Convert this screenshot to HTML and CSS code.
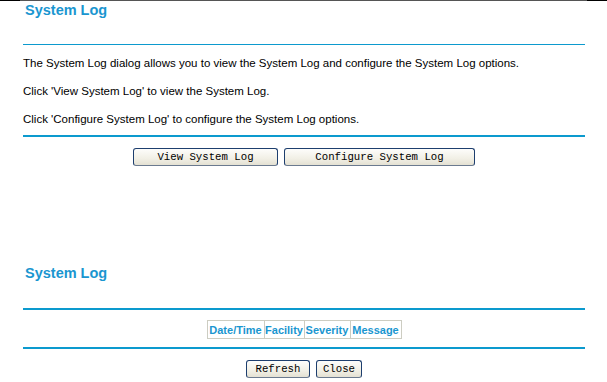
FILE: index.html
```html
<!DOCTYPE html>
<html lang="en">
<head>
  <meta charset="UTF-8">
  <title>System Log</title>
  <link rel="stylesheet" href="styles.css">
</head>
<body>
  <div class="topbar"></div>
  <div class="page">
    <h1>System Log</h1>
    <div class="rule thin"></div>
    <p>The System Log dialog allows you to view the System Log and configure the System Log options.</p>
    <p>Click 'View System Log' to view the System Log.</p>
    <p>Click 'Configure System Log' to configure the System Log options.</p>
    <div class="rule last"></div>
    <div class="buttons">
      <button class="btn-view">View System Log</button>
      <button class="btn-config">Configure System Log</button>
    </div>

    <h1 class="second">System Log</h1>
    <div class="rule"></div>
    <table class="log">
      <tr>
        <th class="c-date">Date/Time</th>
        <th class="c-fac">Facility</th>
        <th class="c-sev">Severity</th>
        <th class="c-msg">Message</th>
      </tr>
    </table>
    <div class="rule mid"></div>
    <div class="buttons bottom">
      <button class="btn-refresh">Refresh</button>
      <button class="btn-close">Close</button>
    </div>
  </div>
</body>
</html>
```

FILE: styles.css
```css
body {
  margin: 0;
  font-family: "Liberation Sans", Arial, sans-serif;
  background: #fff;
  color: #000;
}
.topbar {
  height: 1px;
  background: linear-gradient(to right, #000 0, #000 20px, #555 20px, #555 587px, #000 587px);
}
.page {
  width: 562px;
  padding-left: 23px;
}
h1 {
  margin: 1px 0 25px 2px;
  font-size: 14.5px;
  line-height: 17px;
  font-weight: bold;
  color: #1a96d0;
}
h1.second {
  margin-top: 99px;
  margin-bottom: 26px;
}
.rule {
  height: 2px;
  background: #0c9ace;
}
.rule.thin {
  height: 1px;
}
p {
  margin: 12px 0 15px 0;
  font-size: 11.5px;
  line-height: 13px;
}
p + p {
  margin-top: 0;
}
p:last-of-type {
  margin-bottom: 9px;
}
.buttons {
  display: flex;
  justify-content: center;
  gap: 6px;
  margin-top: 11px;
}
button {
  height: 18px;
  padding: 0;
  font-family: "Liberation Mono", "DejaVu Sans Mono", monospace;
  font-size: 10.7px;
  color: #000;
  background: linear-gradient(#fdfdfb, #f1efe5 60%, #e4e1d3);
  border: 1px solid #1d3e6e;
  border-bottom-color: #6b7a8f;
  border-radius: 3px;
}
.btn-view { width: 145px; }
.btn-config { width: 191px; }
.btn-refresh { width: 64px; }
.btn-close { width: 46px; }
.log {
  margin: 10px auto 0 auto;
  border-collapse: collapse;
}
.log th {
  height: 17px;
  padding: 0;
  border: 1px solid #cdcdc2;
  font-size: 11px;
  font-weight: bold;
  color: #1a96d0;
  text-align: center;
}
.c-date { width: 56px; }
.c-fac { width: 39px; }
.c-sev { width: 45px; }
.c-msg { width: 50px; }
.rule.mid {
  margin-top: 8px;
}
.buttons.bottom {
  margin-top: 11px;
}
```
